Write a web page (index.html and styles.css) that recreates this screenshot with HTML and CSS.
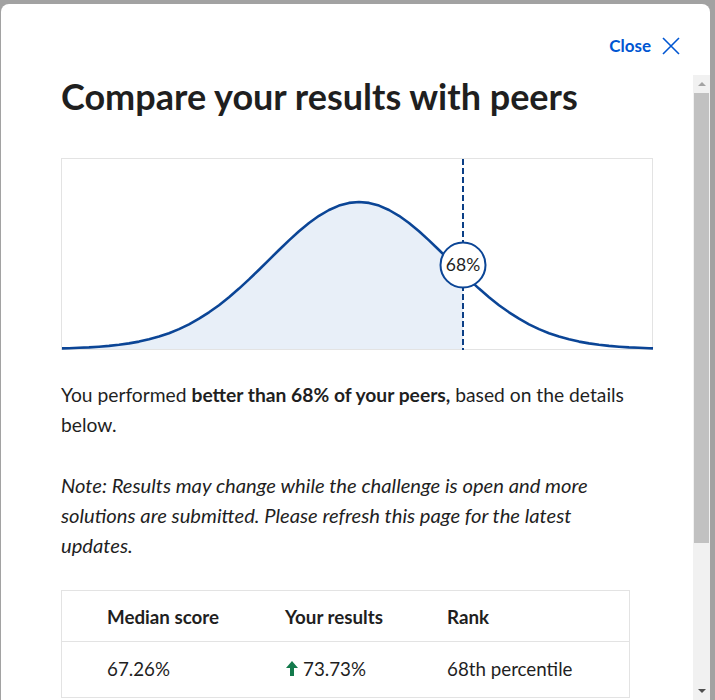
FILE: index.html
```html
<!DOCTYPE html>
<html lang="en">
<head>
<meta charset="utf-8">
<title>Compare your results with peers</title>
<link rel="stylesheet" href="styles.css">
</head>
<body>
<div class="modal">
  <div class="modal-header">
    <button class="close-btn" type="button">
      <span>Close</span>
      <svg class="close-icon" width="18" height="18" viewBox="0 0 18 18" aria-hidden="true">
        <path d="M1 1 L17 17 M17 1 L1 17" stroke="#0056d2" stroke-width="1.6" fill="none"/>
      </svg>
    </button>
  </div>
  <div class="modal-main">
    <div class="content">
      <h1 class="title">Compare your results with peers</h1>
      <div class="chart">
        <svg width="591" height="191" viewBox="0 0 591 191">
          <polygon class="area" points="0,190 0,189.4 7,189.2 17,188.8 27,188.4 37,187.7 47,186.9 57,185.8 67,184.4 77,182.6 87,180.3 97,177.6 107,174.2 117,170.1 127,165.3 137,159.7 147,153.3 157,146.2 167,138.2 177,129.6 187,120.4 197,110.7 207,100.8 217,91 227,81.4 237,72.3 247,64 257,56.8 267,51 277,46.6 287,43.9 297,43 307,43.9 317,46.6 327,51 337,56.8 347,64 357,72.3 367,81.4 377,91 387,100.8 397,110.7 401,114.6 401,190"/>
          <polyline class="curve" points="0,189.4 7,189.2 17,188.8 27,188.4 37,187.7 47,186.9 57,185.8 67,184.4 77,182.6 87,180.3 97,177.6 107,174.2 117,170.1 127,165.3 137,159.7 147,153.3 157,146.2 167,138.2 177,129.6 187,120.4 197,110.7 207,100.8 217,91 227,81.4 237,72.3 247,64 257,56.8 267,51 277,46.6 287,43.9 297,43 307,43.9 317,46.6 327,51 337,56.8 347,64 357,72.3 367,81.4 377,91 387,100.8 397,110.7 407,120.4 417,129.6 427,138.2 437,146.2 447,153.3 457,159.7 467,165.3 477,170.1 487,174.2 497,177.6 507,180.3 517,182.6 527,184.4 537,185.8 547,186.9 557,187.7 567,188.4 577,188.8 587,189.2 591,189.4"/>
          <line class="marker" x1="401" y1="0" x2="401" y2="191"/>
          <circle class="bubble" cx="401" cy="106" r="22.5"/>
          <text class="bubble-text" x="401" y="112" text-anchor="middle">68%</text>
        </svg>
      </div>
      <p class="summary">You performed <strong>better than 68% of your peers,</strong> based on the details below.</p>
      <p class="note">Note: Results may change while the challenge is open and more solutions are submitted. Please refresh this page for the latest updates.</p>
      <div class="results">
        <div class="row head">
          <div class="cell">Median score</div>
          <div class="cell">Your results</div>
          <div class="cell">Rank</div>
        </div>
        <div class="row">
          <div class="cell">67.26%</div>
          <div class="cell result">
            <svg class="up-arrow" width="12" height="15" viewBox="0 0 12 15" aria-hidden="true">
              <path d="M6 0 L12 7 L8 7 L8 15 L4 15 L4 7 L0 7 Z" fill="#137a4c"/>
            </svg>
            <span>73.73%</span>
          </div>
          <div class="cell">68th percentile</div>
        </div>
      </div>
    </div>
    <div class="scrollbar" aria-hidden="true">
      <div class="sb-btn sb-up"><span class="tri-up"></span></div>
      <div class="sb-thumb"></div>
      <div class="sb-track"></div>
      <div class="sb-btn sb-down"><span class="tri-down"></span></div>
    </div>
  </div>
</div>
</body>
</html>
```

FILE: styles.css
```css
* { box-sizing: border-box; }

html, body {
  margin: 0;
  padding: 0;
  height: 700px;
  overflow: hidden;
}

body {
  background: #a2a2a2;
  font-family: Lato, "Liberation Sans", sans-serif;
  color: #1f1f1f;
}

.modal {
  margin: 4px 5px 0 1px;
  height: 696px;
  background: #ffffff;
  border-radius: 8px 8px 0 0;
  display: flex;
  flex-direction: column;
  overflow: hidden;
}

.modal-header {
  height: 71px;
  flex: none;
  display: flex;
  justify-content: flex-end;
  align-items: flex-start;
  padding: 31px 30px 0 0;
}

.close-btn {
  display: flex;
  align-items: center;
  gap: 11px;
  background: none;
  border: 0;
  padding: 0;
  font-family: inherit;
  font-size: 17px;
  font-weight: 700;
  color: #0056d2;
  cursor: pointer;
}

.close-icon { display: block; }

.modal-main {
  flex: 1;
  min-height: 0;
  display: flex;
}

.content {
  flex: 1;
  padding: 0 40px 0 60px;
  overflow: hidden;
}

.title {
  margin: 0 0 41px;
  font-size: 36px;
  line-height: 42px;
  font-weight: 700;
  color: #1f1f1f;
}

.chart {
  width: 592px;
  height: 192px;
  border: 1px solid #e3e3e3;
}

.chart svg { display: block; overflow: visible; }

.area { fill: #e8eff8; }

.curve {
  fill: none;
  stroke: #0b4596;
  stroke-width: 2.6;
  stroke-linejoin: round;
}

.marker {
  stroke: #0b3f86;
  stroke-width: 2;
  stroke-dasharray: 6 3;
}

.bubble {
  fill: #ffffff;
  stroke: #0b4596;
  stroke-width: 2;
}

.bubble-text {
  font-family: Lato, "Liberation Sans", sans-serif;
  font-size: 17.5px;
  fill: #1f1f1f;
}

.summary, .note {
  margin: 0;
  max-width: 574px;
  font-size: 19.25px;
  line-height: 30px;
}

.summary { margin-top: 30px; }

.note {
  margin-top: 30px;
  font-size: 20.2px;
  font-style: italic;
}

.results {
  margin-top: 30px;
  width: 569px;
  border: 1px solid #e3e3e3;
}

.row {
  display: grid;
  grid-template-columns: 178px 162px 1fr;
  padding-left: 45px;
  height: 55px;
  padding-bottom: 3px;
  align-items: center;
  font-size: 18.75px;
}

.row.head {
  height: 51px;
  padding-bottom: 0;
  font-weight: 700;
  border-bottom: 1px solid #e3e3e3;
}

.result {
  display: flex;
  align-items: center;
  gap: 5px;
  padding-left: 1px;
}

.up-arrow { display: block; }

.scrollbar {
  width: 17px;
  flex: none;
  display: flex;
  flex-direction: column;
  background: #f1f1f1;
}

.sb-btn {
  height: 18px;
  flex: none;
  display: flex;
  align-items: center;
  justify-content: center;
  background: #f1f1f1;
}

.sb-thumb {
  height: 450px;
  flex: none;
  background: #c1c1c1;
  margin: 0 1px;
}

.sb-track { flex: 1; }

.tri-up {
  width: 0;
  height: 0;
  border-left: 4px solid transparent;
  border-right: 4px solid transparent;
  border-bottom: 4px solid #a3a3a3;
}

.tri-down {
  width: 0;
  height: 0;
  border-left: 4px solid transparent;
  border-right: 4px solid transparent;
  border-top: 4px solid #505050;
}
```
